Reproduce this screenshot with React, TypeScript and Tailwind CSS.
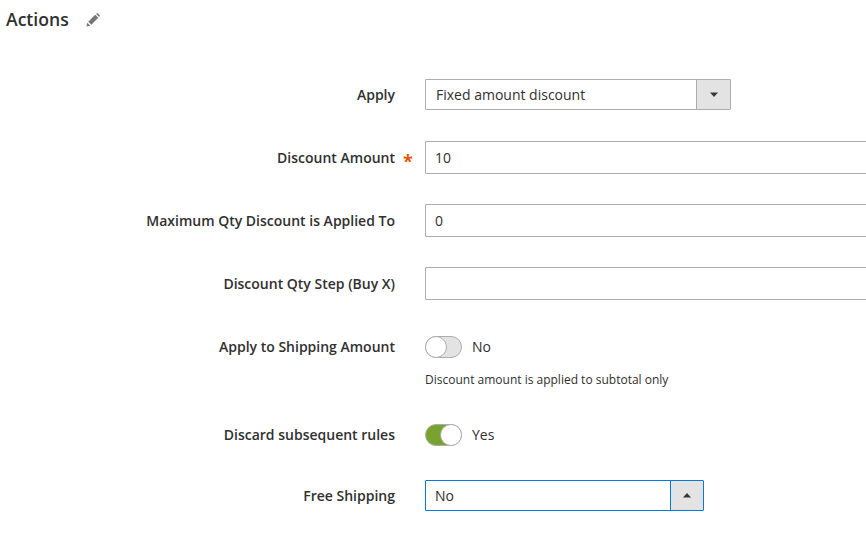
function Row({ label, required, tight, children }: { label: string; required?: boolean; tight?: boolean; children: React.ReactNode }) {
  return (
    <div className="flex items-center">
      <div className={`w-[395px] shrink-0 text-right text-[14px] font-semibold text-[#303030] ${tight ? 'pb-[2px] leading-[19px]' : ''}`}>{label}</div>
      <div className="w-[30px] shrink-0 pl-[8px] text-[18px] font-bold leading-none text-[#eb5202]">
        {required ? <span className="relative top-[3px]">*</span> : ''}
      </div>
      {children}
    </div>
  );
}

function Caret({ up }: { up?: boolean }) {
  return (
    <svg width="8" height="5" viewBox="0 0 8 5" className="fill-[#41362f]">
      <path d={up ? 'M0 4.5 L4 0 L8 4.5 Z' : 'M0 0.5 L8 0.5 L4 5 Z'} />
    </svg>
  );
}

function Toggle({ on, label }: { on?: boolean; label: string }) {
  return (
    <div className="flex h-[22px] items-center">
      <div className={`flex h-[22px] w-[37px] rounded-full border border-[#adadad] ${on ? 'justify-end bg-[#79a22e]' : 'justify-start bg-[#e3e3e3]'}`}>
        <div className="-m-px h-[22px] w-[22px] rounded-full border border-[#adadad] bg-white" />
      </div>
      <span className="ml-[10px] pb-[2px] text-[14px] leading-[19px] text-[#303030]">{label}</span>
    </div>
  );
}

export default function App() {
  return (
    <div className="h-[549px] w-[866px] overflow-hidden bg-white font-['Open_Sans',sans-serif] text-[#303030]">
      <div className="flex h-[40px] items-center pl-[6px]">
        <h2 className="pb-[2px] text-[17.6px] leading-[24px] font-semibold text-[#303030]">Actions</h2>
        <svg width="14" height="14" viewBox="0 0 16 16" className="ml-[17px] fill-[#767676]">
          <path d="M0.5 15.5 L1.5 11 L5 14.5 Z M2.6 9.9 L10.5 2 L14 5.5 L6.1 13.4 Z M11.5 1 L12.3 0.4 Q13 0 13.6 0.5 L15.5 2.4 Q16 3 15.6 3.6 L15 4.5 Z" />
        </svg>
      </div>

      <div className="mt-[39px] flex flex-col">
        <Row label="Apply">
          <div className="flex h-[31px] w-[306px] rounded-[1px] border border-[#adadad]">
            <div className="flex flex-1 items-center pl-[10px] text-[14px]">Fixed amount discount</div>
            <div className="flex w-[34px] items-center justify-center border-l border-[#adadad] bg-[#e3e3e3]">
              <Caret />
            </div>
          </div>
        </Row>

        <div className="mt-[31px]">
          <Row label="Discount Amount" required>
            <div className="flex h-[33px] w-[460px] shrink-0 items-center rounded-[1px] border border-[#adadad] pl-[9px] text-[14px]">10</div>
          </Row>
        </div>

        <div className="mt-[30px]">
          <Row label="Maximum Qty Discount is Applied To">
            <div className="flex h-[33px] w-[460px] shrink-0 items-center rounded-[1px] border border-[#adadad] pl-[9px] text-[14px]">0</div>
          </Row>
        </div>

        <div className="mt-[30px]">
          <Row label="Discount Qty Step (Buy X)">
            <div className="h-[33px] w-[460px] shrink-0 rounded-[1px] border border-[#adadad]" />
          </Row>
        </div>

        <div className="mt-[36px]">
          <Row label="Apply to Shipping Amount" tight>
            <Toggle label="No" />
          </Row>
        </div>
        <div className="mt-[13px] pl-[425px] text-[12px] leading-[18px] text-[#303030]">Discount amount is applied to subtotal only</div>

        <div className="mt-[35px]">
          <Row label="Discard subsequent rules" tight>
            <Toggle on label="Yes" />
          </Row>
        </div>

        <div className="mt-[34px]">
          <Row label="Free Shipping">
            <div className="flex h-[31px] w-[279px] rounded-[1px] border border-[#007bdb]">
              <div className="flex flex-1 items-center pl-[9px] text-[14px]">No</div>
              <div className="flex w-[33px] items-center justify-center border-l border-[#007bdb] bg-[#e3e3e3]">
                <Caret up />
              </div>
            </div>
          </Row>
        </div>
      </div>
    </div>
  );
}
